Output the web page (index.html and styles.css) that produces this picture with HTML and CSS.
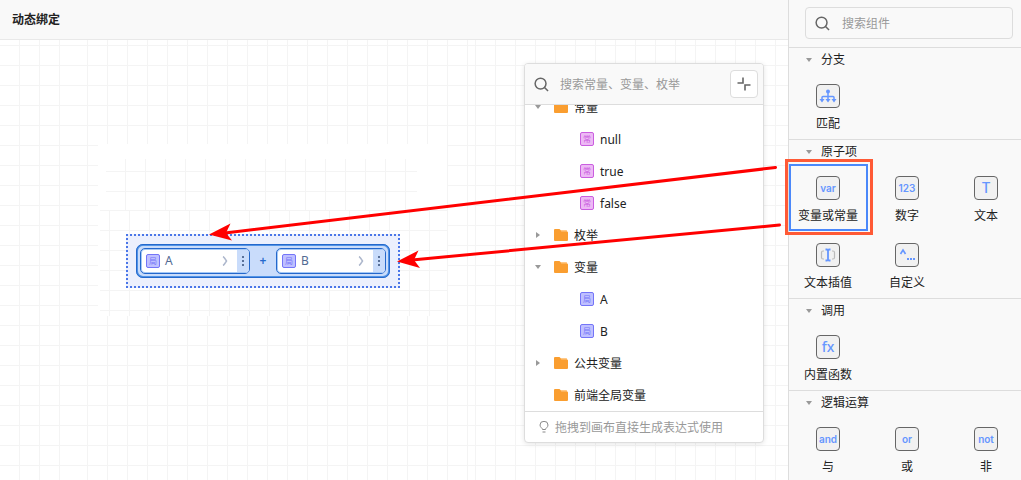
FILE: index.html
```html
<!DOCTYPE html>
<html lang="zh-CN">
<head>
<meta charset="utf-8">
<title>动态绑定</title>
<link rel="stylesheet" href="styles.css">
</head>
<body>
<svg class="sprite" aria-hidden="true">
  <symbol id="search" viewBox="0 0 16 16"><circle cx="7" cy="7" r="5.800"/><path d="M11 11l4 4"/></symbol>
  <symbol id="folder" viewBox="0 0 14 12"><path fill="#ffc987" d="M6 1h6.5q.5 0 .5.5V5H6z"/><path fill="#fa9e30" d="M1 0h4.3q.5 0 .8.5L7.300 2.500H13q1 0 1 1V11q0 1-1 1H1q-1 0-1-1V1q0-1 1-1z"/></symbol>
</svg>
<div class="app">
  <main class="workspace">
    <header class="topbar"><h1>动态绑定</h1></header>
    <section class="canvas">
      <svg class="grid" aria-hidden="true">
        <defs>
          <pattern id="cells" width="20" height="20" patternUnits="userSpaceOnUse"><path d="M.5 0v20M0 .5h20"/></pattern>
          <pattern id="cellsLeft" href="#cells" patternTransform="translate(19 5)"/>
          <pattern id="cellsMid" href="#cells" patternTransform="translate(87 5)"/>
          <pattern id="cellsRight" href="#cells" patternTransform="translate(475 5)"/>
          <pattern id="cellsUpper" href="#cells" patternTransform="translate(125 131)"/>
          <pattern id="cellsLower" href="#cells" patternTransform="translate(109 170)"/>
        </defs>
        <rect width="79" height="100%" fill="url(#cellsLeft)"/>
        <rect x="79" width="396" height="100%" fill="url(#cellsMid)"/>
        <rect x="475" width="100%" height="100%" fill="url(#cellsRight)"/>
        <rect x="98" y="104" width="349" height="172" fill="#fff"/>
        <rect x="106" y="119" width="311" height="51" fill="url(#cellsUpper)"/>
        <rect x="100" y="170" width="347" height="106" fill="url(#cellsLower)"/>
      </svg>

      <div class="selection">
        <div class="expression">
          <div class="operand"><span class="tag local">局</span><span class="operand-name">A</span><svg class="chevron" viewBox="0 0 6 10"><path d="M1 .5Q2 1 4.500 5Q2 9 1 9.500"/></svg><button class="grip" aria-label="A 更多"><svg viewBox="0 0 4 12"><path d="M1 1h2v2H1zM1 5h2v2H1zM1 9h2v2H1z"/></svg></button></div>
          <span class="operator">+</span>
          <div class="operand"><span class="tag local">局</span><span class="operand-name">B</span><svg class="chevron" viewBox="0 0 6 10"><path d="M1 .5Q2 1 4.500 5Q2 9 1 9.500"/></svg><button class="grip" aria-label="B 更多"><svg viewBox="0 0 4 12"><path d="M1 1h2v2H1zM1 5h2v2H1zM1 9h2v2H1z"/></svg></button></div>
        </div>
      </div>

      <div class="picker">
        <div class="picker-head">
          <svg class="search-icon"><use href="#search"/></svg>
          <input type="text" aria-label="搜索常量、变量、枚举" placeholder="搜索常量、变量、枚举">
          <button class="collapse" aria-label="收起"><svg viewBox="0 0 14 14"><path d="M.5 6H6V.5M8 13.500V8H13.500"/></svg></button>
        </div>
        <div class="tree-view">
          <ul class="tree">
            <li class="node"><button class="twist open" aria-label="收起常量"></button><svg class="folder"><use href="#folder"/></svg>常量</li>
            <li class="node leaf"><span class="tag const">常</span>null</li>
            <li class="node leaf"><span class="tag const">常</span>true</li>
            <li class="node leaf"><span class="tag const">常</span>false</li>
            <li class="node"><button class="twist" aria-label="展开枚举"></button><svg class="folder"><use href="#folder"/></svg>枚举</li>
            <li class="node"><button class="twist open" aria-label="收起变量"></button><svg class="folder"><use href="#folder"/></svg>变量</li>
            <li class="node leaf"><span class="tag local">局</span>A</li>
            <li class="node leaf"><span class="tag local">局</span>B</li>
            <li class="node"><button class="twist" aria-label="展开公共变量"></button><svg class="folder"><use href="#folder"/></svg>公共变量</li>
            <li class="node"><span class="twist none"></span><svg class="folder"><use href="#folder"/></svg>前端全局变量</li>
          </ul>
        </div>
        <div class="picker-foot"><svg viewBox="0 0 10 12"><path d="M3.500 8.500C3.500 7 1 6.500 1 4a4 3.700 0 0 1 8 0C9 6.500 6.500 7 6.500 8.500zM3.500 11h3"/></svg>拖拽到画布直接生成表达式使用</div>
      </div>
    </section>
  </main>

  <aside class="sidebar">
    <div class="sidebar-search">
      <div class="search-box">
        <svg class="search-icon"><use href="#search"/></svg>
        <input type="text" aria-label="搜索组件" placeholder="搜索组件">
      </div>
    </div>
    <section class="group">
      <h2><span class="twist open"></span>分支</h2>
      <div class="items">
        <button class="item"><span class="glyph"><svg viewBox="0 0 18 14"><circle cx="9" cy="2.500" r="2" fill="#6596ff" stroke="none"/><path stroke-width="1.500" d="M9 3v8M3 11V8.500q0-1 1-1h10q1 0 1 1V11"/><path fill="#6596ff" stroke="none" d="M.5 10h5L3 13.500zM6.500 10h5L9 13.500zM12.500 10h5L15 13.500z"/></svg></span>匹配</button>
      </div>
    </section>
    <section class="group">
      <h2><span class="twist open"></span>原子项</h2>
      <div class="items">
        <button class="item selected"><span class="glyph">var</span>变量或常量</button>
        <button class="item"><span class="glyph">123</span>数字</button>
        <button class="item"><span class="glyph thin">T</span>文本</button>
        <button class="item"><span class="glyph"><svg viewBox="0 0 18 14"><path stroke="#bbb" d="M5 3H4Q2.500 3 2.500 4.500v5Q2.500 11 4 11h1M13 3h1q1.500 0 1.500 1.500v5q0 1.500-1.500 1.500h-1"/><path stroke-width="1.800" d="M6.500 1.500h1.500l1 1 1-1h1.500M9 2v10M6.500 12.500h1.500l1-1 1 1h1.500"/></svg></span>文本插值</button>
        <button class="item"><span class="glyph"><svg viewBox="0 0 18 14"><path stroke-width="1.600" d="M2.500 6l2.500-4L7.500 6"/><path fill="#6596ff" stroke="none" d="M9 10h2v2H9zM12 10h2v2h-2zM15 10h2v2h-2z"/></svg></span>自定义</button>
      </div>
    </section>
    <section class="group">
      <h2><span class="twist open"></span>调用</h2>
      <div class="items">
        <button class="item"><span class="glyph func">fx</span>内置函数</button>
      </div>
    </section>
    <section class="group">
      <h2><span class="twist open"></span>逻辑运算</h2>
      <div class="items">
        <button class="item"><span class="glyph">and</span>与</button>
        <button class="item"><span class="glyph">or</span>或</button>
        <button class="item"><span class="glyph">not</span>非</button>
      </div>
    </section>
  </aside>

  <svg class="annotations" aria-hidden="true">
    <path class="line" d="M775.500 167.500L225 233M779.500 225L412 260"/>
    <path class="head" d="M209 234.500L230.500 223.500L226 233L232 240.500zM397 261.500L418.500 250.500L414 260L420 268z"/>
    <rect class="frame" x="786.500" y="160.500" width="85" height="73"/>
  </svg>
</div>
</body>
</html>
```
FILE: styles.css
```css
* { box-sizing: border-box; }

body {
  margin: 0;
  font: 12px/16px "Noto Sans", "Noto Sans CJK SC", sans-serif;
  color: #222;
}

button, input { font: inherit; color: inherit; }
button { border: 0; padding: 0; background: none; }
svg { flex: none; fill: none; }

.sprite { position: absolute; width: 0; height: 0; }

.app {
  position: relative;
  display: flex;
  height: 100vh;
  overflow: hidden;
}

.workspace { flex: 1; display: flex; flex-direction: column; min-width: 0; }

.topbar {
  display: flex;
  align-items: center;
  height: 40px;
  padding: 0 12px;
  background: #f9f9f9;
  border-bottom: 1px solid #e9e9e9;
}
.topbar h1 { margin: 0; font-size: 12px; font-weight: 600; }

.canvas { position: relative; flex: 1; overflow: hidden; background: #fff; }
.grid { position: absolute; inset: 0; width: 100%; height: 100%; }
.grid path { stroke: #f4f4f4; }

.selection {
  position: absolute;
  left: 126px;
  top: 194px;
  padding: 8px;
  border: 2px dotted #4a76e8;
  background: #ecf0fd;
}
.expression {
  display: flex;
  align-items: center;
  padding: 2px;
  border: 2px solid #5294e6;
  outline: 1px solid #2468cc;
  outline-offset: -1px;
  border-radius: 7px;
  background: #c9dcfb;
}
.operand {
  display: flex;
  align-items: center;
  width: 110px;
  height: 26px;
  padding-left: 5px;
  border: 1px solid #2468cc;
  border-radius: 5px;
  background: #fff;
  box-shadow: inset 0 0 0 1px #a5c8f5;
  overflow: hidden;
}
.operand-name { flex: 1; padding-left: 5px; color: #526a93; }
.chevron { width: 6px; height: 10px; margin-right: 9px; stroke: #aeb8cd; stroke-width: 1.5; }
.grip {
  display: grid;
  place-items: center;
  width: 12px;
  height: 24px;
  background: #c9dcfb;
  border: solid #a5c8f5;
  border-width: 1px 0;
}
.grip svg { width: 4px; height: 12px; fill: #587099; }
.operator { width: 26px; text-align: center; color: #2468cc; font-weight: 600; }

.tag {
  display: grid;
  place-items: center;
  flex: none;
  width: 14px;
  height: 14px;
  border: 1px solid;
  border-radius: 2px;
  font-size: 8px;
  line-height: 12px;
}
.tag.local { color: #7475f8; background: #bfc0ff; }
.tag.const { color: #ca5ee0; background: #edb9f5; }

.picker {
  position: absolute;
  left: 524px;
  top: 23px;
  width: 240px;
  background: #fff;
  border: 1px solid #ddd;
  border-radius: 4px;
  box-shadow: 0 1px 5px #0000001a;
  overflow: hidden;
}
.picker-head {
  display: flex;
  align-items: center;
  height: 41px;
  padding: 0 5px 0 9px;
  background: #f9f9f9;
  border-bottom: 1px solid #ddd;
}
.search-icon { width: 15px; height: 15px; stroke: #666; stroke-width: 1.6; }
input {
  flex: 1;
  min-width: 0;
  padding: 2px 0 0;
  margin-left: 11px;
  border: 0;
  outline: 0;
  background: none;
}
input::placeholder { color: #999; opacity: 1; }
.collapse {
  display: grid;
  place-items: center;
  width: 28px;
  height: 28px;
  border: 1px solid #ddd;
  border-radius: 4px;
  background: #fff;
}
.collapse svg { width: 14px; height: 14px; stroke: #666; stroke-width: 1.6; }

.tree-view { overflow: hidden; }
.tree { margin: -14px 0 0; padding: 0; list-style: none; }
.node { display: flex; align-items: center; height: 32px; padding: 2px 0 0 9px; }
.node.leaf { gap: 6px; padding-left: 55px; }
.node > * { margin-bottom: 2px; }
.node .folder { width: 14px; height: 12px; margin: 0 6px 2px 12px; }

.twist { display: grid; place-items: center; width: 8px; height: 8px; }
.twist::before {
  content: "";
  border: solid transparent;
  border-width: 3px 0 3px 4px;
  border-left-color: #999;
}
.twist.open::before { border-width: 4px 3px 0; border-color: #999 transparent; }
.twist.none::before { display: none; }

.picker-foot {
  display: flex;
  align-items: center;
  gap: 6px;
  height: 31px;
  padding: 2px 0 0 14px;
  border-top: 1px solid #ddd;
  color: #999;
}
.picker-foot svg { width: 10px; height: 12px; margin-bottom: 2px; stroke: #888; }

.sidebar {
  flex: none;
  width: 233px;
  background: #f9f9f9;
  border-left: 1px solid #ddd;
  overflow: hidden;
}
.sidebar-search { padding: 7px 8px 8px 16px; }
.search-box {
  display: flex;
  align-items: center;
  height: 32px;
  padding-left: 9px;
  border: 1px solid #ddd;
  border-radius: 4px;
}
.search-box input { margin-left: 12px; }

.group { border-top: 1px solid #ddd; }
.group h2 {
  display: flex;
  align-items: center;
  gap: 8px;
  height: 24px;
  margin: 0;
  padding-left: 16px;
  font-size: 12px;
  font-weight: 400;
}
.items { display: grid; grid-template-columns: repeat(3, 79px); }
.item {
  display: flex;
  flex-direction: column;
  align-items: center;
  gap: 8px;
  height: 67px;
  padding: 10px 1px 0 0;
  border: 2px solid transparent;
  white-space: nowrap;
}
.item.selected { border-color: #4b88fa; }
.glyph {
  display: grid;
  place-items: center;
  flex: none;
  width: 24px;
  height: 24px;
  border: 1px solid #666;
  border-radius: 4px;
  background: #f1f1f1;
  color: #6596ff;
  font: 600 10px/20px Inter, sans-serif;
}
.glyph.thin { font-weight: 500; font-size: 14px; }
.glyph.func { font: 500 14px/20px "Noto Sans", sans-serif; }
.glyph svg { width: 18px; height: 14px; stroke: #6596ff; stroke-width: 1.2; }

.annotations {
  position: absolute;
  inset: 0;
  width: 100%;
  height: 100%;
  pointer-events: none;
}
.line { stroke: #f00; stroke-width: 3; stroke-linecap: round; }
.head { fill: #f00; }
.frame { stroke: #ff5a36; stroke-width: 3; }
```
